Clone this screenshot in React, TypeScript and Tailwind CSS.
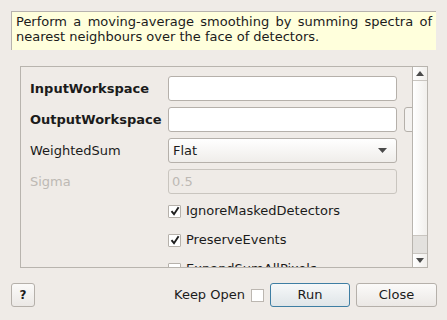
import React from "react";

const font = { fontFamily: '"DejaVu Sans", sans-serif' };

function Check({ checked }: { checked: boolean }) {
  return (
    <span className="flex h-[13px] w-[13px] shrink-0 items-center justify-center rounded-[1px] border border-[#b6b1ab] bg-white">
      {checked && (
        <svg width="10" height="10" viewBox="0 0 10 10">
          <path d="M1.5 5.2 L4 8.2 L8.6 1.2" fill="none" stroke="#1e1e1e" strokeWidth="1.9" />
        </svg>
      )}
    </span>
  );
}

function Field({ value, disabled }: { value?: string; disabled?: boolean }) {
  return (
    <div
      className={`flex h-[25px] w-[229px] shrink-0 items-center rounded-[3px] border px-[3px] ${
        disabled ? "border-[#c9c5bf] bg-[#efebe7] text-[#bdb9b4]" : "border-[#b5b0aa] bg-white"
      }`}
    >
      {value}
    </div>
  );
}

export default function App() {
  return (
    <div className="h-[320px] w-[447px] overflow-hidden bg-[#efebe7] text-[13px] text-[#1b1b1b]" style={font}>
      {/* Description */}
      <div className="mx-[11px] mt-[11px] h-[39px] border-t border-l border-[#b7b3ae] border-r-white border-b-white bg-[#ffffdc] px-[4px] pt-[2px] text-justify leading-[15px] [text-align-last:left]">
        Perform a moving-average smoothing by summing spectra of nearest neighbours over the face of detectors.
      </div>

      {/* Properties */}
      <div className="ml-[20px] mt-[16px] flex h-[202px] w-[408px] border border-[#b8b4ae]">
        <div className="relative min-w-0 flex-1 overflow-hidden">
          <div className="flex flex-col gap-[6px] pl-[9px] pt-[9px]">
            <div className="flex items-center">
              <span className="w-[138px] shrink-0 whitespace-nowrap font-bold">InputWorkspace</span>
              <Field />
            </div>
            <div className="flex items-center">
              <span className="w-[138px] shrink-0 whitespace-nowrap font-bold">OutputWorkspace</span>
              <Field />
              <div className="ml-[7px] h-[25px] w-[24px] shrink-0 rounded-[3px] border border-[#b5b0aa] bg-[#f4f2f0]" />
            </div>
            <div className="flex items-center">
              <span className="w-[138px] shrink-0">WeightedSum</span>
              <div className="flex h-[25px] w-[229px] shrink-0 items-center justify-between rounded-[3px] border border-[#b5b0aa] bg-gradient-to-b from-white to-[#efedea] pl-[4px] pr-[9px]">
                <span>Flat</span>
                <svg width="9" height="5" viewBox="0 0 9 5">
                  <path d="M0 0 H9 L4.5 5 Z" fill="#4a4a4a" />
                </svg>
              </div>
            </div>
            <div className="flex items-center">
              <span className="w-[138px] shrink-0 text-[#bdb9b4]">Sigma</span>
              <Field value="0.5" disabled />
            </div>
          </div>
          <div className="flex flex-col pl-[147px] pt-[2px]">
            {[
              ["IgnoreMaskedDetectors", true],
              ["PreserveEvents", true],
              ["ExpandSumAllPixels", false],
            ].map(([label, on]) => (
              <div key={label as string} className="flex h-[29px] shrink-0 items-center gap-[5px] pt-[1px]">
                <Check checked={on as boolean} />
                <span>{label as string}</span>
              </div>
            ))}
          </div>
        </div>

        {/* Scrollbar */}
        <div className="flex w-[15px] shrink-0 flex-col border-l border-[#b8b4ae] bg-gradient-to-r from-white to-[#f1efec]">
          <div className="flex h-[14px] items-center justify-center border-b border-[#c9c5c0]">
            <svg width="8" height="5" viewBox="0 0 8 5">
              <path d="M0 5 H8 L4 0 Z" fill="#4a4a4a" />
            </svg>
          </div>
          <div className="flex-1" />
          <div className="h-[18px] border-t border-[#c9c5c0] bg-[#e3e1de]" />
          <div className="flex h-[14px] items-center justify-center border-t border-[#c9c5c0]">
            <svg width="8" height="5" viewBox="0 0 8 5">
              <path d="M0 0 H8 L4 5 Z" fill="#4a4a4a" />
            </svg>
          </div>
        </div>
      </div>

      {/* Buttons */}
      <div className="mt-[15px] flex items-center pl-[11px]">
        <button className="h-[24px] w-[24px] rounded-[3px] border border-[#b5b0aa] bg-gradient-to-b from-[#fbfaf9] to-[#ebe8e5] text-[12px] font-bold">
          ?
        </button>
        <span className="ml-[139px]">Keep Open</span>
        <span className="ml-[6px] h-[13px] w-[13px] border border-[#bcb7b1] bg-white" />
        <button className="ml-[6px] h-[24px] w-[80px] rounded-[3px] border border-[#3e7ea3] bg-gradient-to-b from-[#f6f8f9] to-[#dfe5e8]">
          Run
        </button>
        <button className="ml-[6px] h-[24px] w-[81px] rounded-[3px] border border-[#b5b0aa] bg-gradient-to-b from-[#fbfaf9] to-[#ebe8e5]">
          Close
        </button>
      </div>
    </div>
  );
}
